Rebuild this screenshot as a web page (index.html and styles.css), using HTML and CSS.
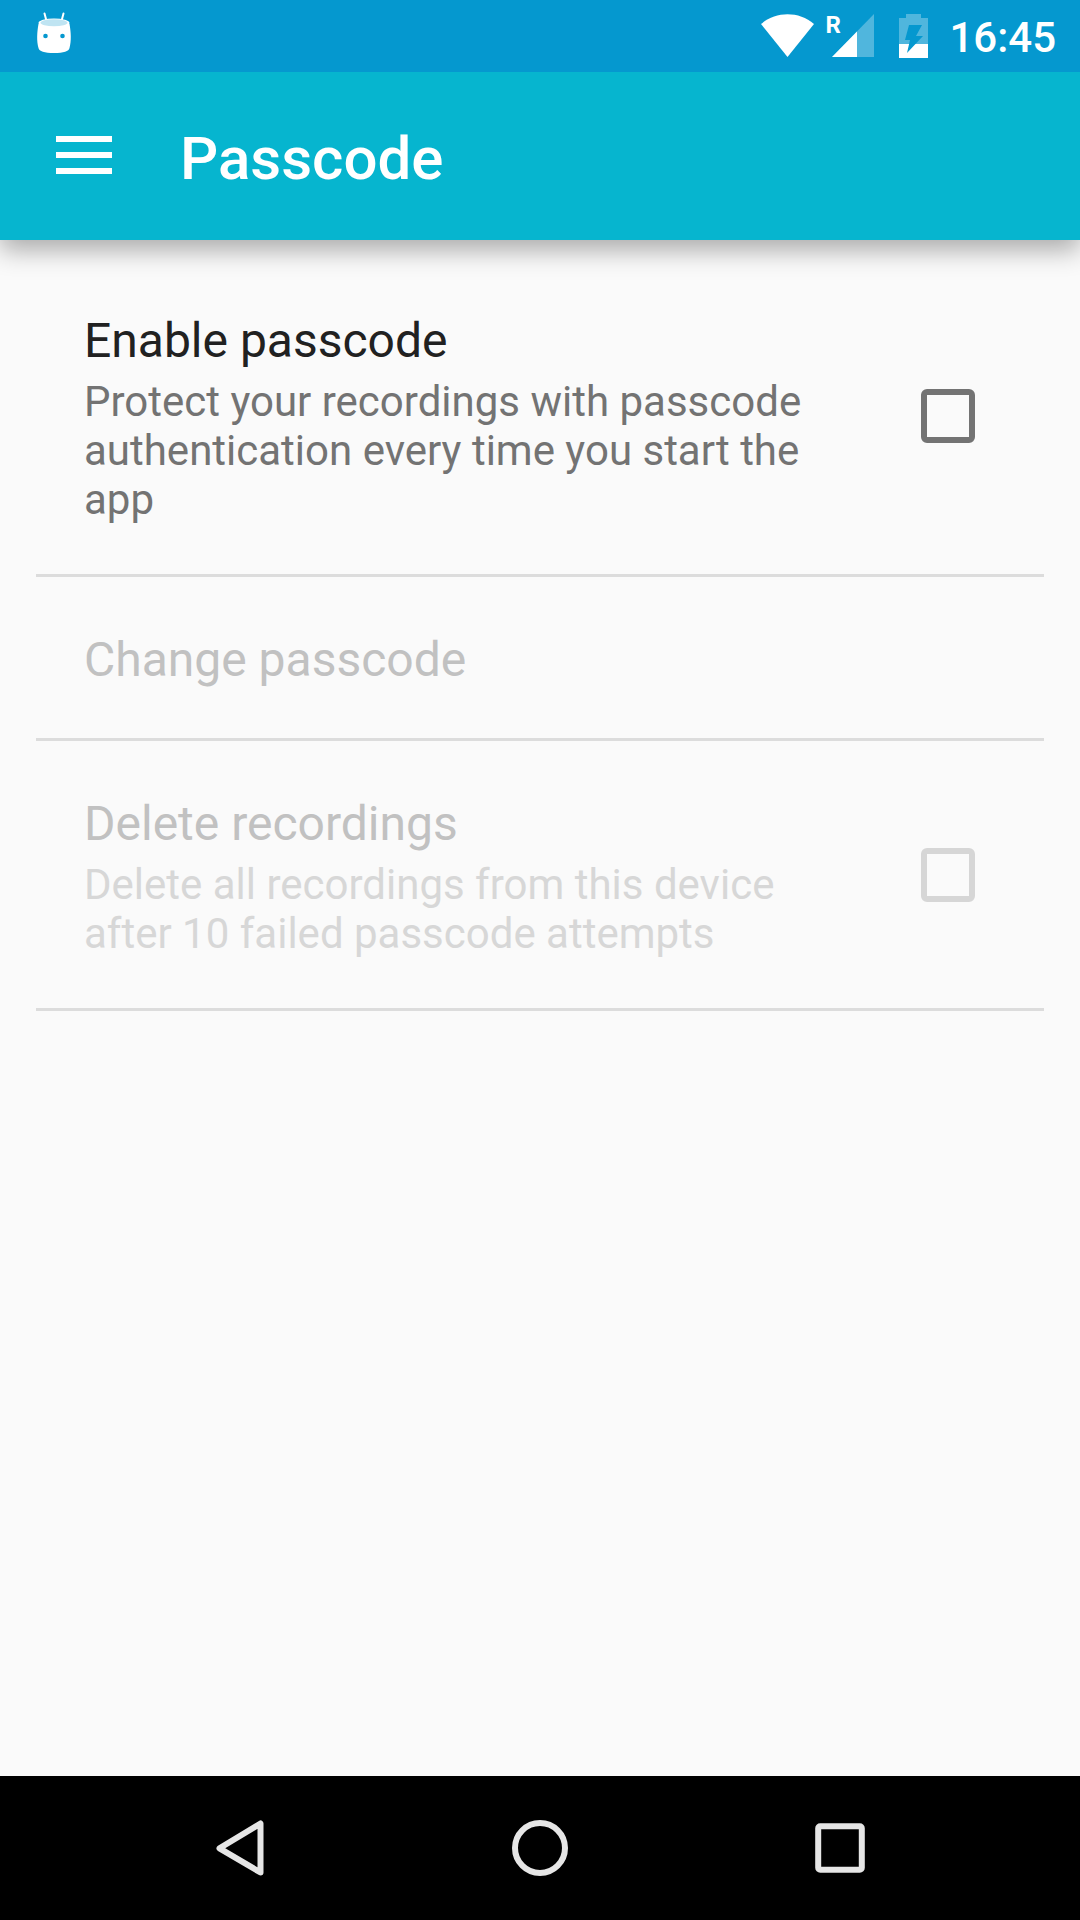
FILE: index.html
```html
<!DOCTYPE html>
<html lang="en">
<head>
<meta charset="utf-8">
<meta name="viewport" content="width=device-width, initial-scale=1">
<title>Passcode</title>
<link rel="stylesheet" href="styles.css">
</head>
<body>
<div class="status-bar">
  <svg class="robot" width="36" height="44" viewBox="36 11 36 44" aria-hidden="true">
    <path d="M44.500 13.500L46.500 21M63.500 13.500L61.500 21" stroke="#fff" stroke-width="2" stroke-linecap="round"/>
    <path d="M38.500 24C37 32 36.500 41 38.500 48Q39.500 53 54 53Q68.500 53 69.500 48C71.500 41 71 32 69.500 24Z" fill="#fff"/>
    <ellipse cx="54" cy="23" rx="15.500" ry="4.500" fill="#fff"/>
    <ellipse cx="54" cy="22.800" rx="13.500" ry="3.500" fill="#bfe4f2"/>
    <circle cx="45.500" cy="36" r="2.300" fill="#0598cf"/>
    <circle cx="62.500" cy="36" r="2.300" fill="#0598cf"/>
  </svg>
  <div class="status-icons">
    <svg width="54" height="44" viewBox="761 14 54 44" aria-hidden="true">
      <path d="M787.500 57L761 24C776 11 799 11 814 24Z" fill="#fff"/>
    </svg>
    <div class="signal">
      <span class="roaming">R</span>
      <svg width="42" height="44" viewBox="0 0 42 44" aria-hidden="true">
        <path d="M42 0V43H0Z" fill="#50b6dd"/>
        <path d="M25 17.500V43H0Z" fill="#fff"/>
      </svg>
    </div>
    <svg class="battery" width="29" height="44" viewBox="0 0 29 44" aria-hidden="true">
      <path d="M7 0H22V4H29V44H0V4H7Z" fill="#50b6dd"/>
      <path d="M0 30H29V44H0Z" fill="#fff"/>
      <path d="M10 11H23L17 22H24L8 39L11 26H6Z" fill="#0598cf"/>
    </svg>
    <time class="clock">16:45</time>
  </div>
</div>
<header class="toolbar">
  <button class="menu" type="button" aria-label="Menu">
    <svg width="56" height="38" viewBox="0 0 56 38" aria-hidden="true">
      <path d="M0 0H56V6H0ZM0 16H56V22H0ZM0 32H56V38H0Z" fill="#fff"/>
    </svg>
  </button>
  <h1 class="title">Passcode</h1>
</header>
<main class="settings">
  <label class="row" for="enable">
    <span class="text">
      <span class="name">Enable passcode</span>
      <span class="summary">Protect your recordings with passcode authentication every time you start the app</span>
    </span>
    <input class="box" id="enable" type="checkbox">
  </label>
  <button class="row disabled" type="button" disabled>
    <span class="text">
      <span class="name">Change passcode</span>
    </span>
  </button>
  <label class="row disabled" for="delete">
    <span class="text">
      <span class="name">Delete recordings</span>
      <span class="summary">Delete all recordings from this device after 10 failed passcode attempts</span>
    </span>
    <input class="box" id="delete" type="checkbox" disabled>
  </label>
</main>
<nav class="nav-bar">
  <button class="nav-button" type="button" aria-label="Back">
    <svg width="56" height="56" viewBox="0 0 56 56" aria-hidden="true">
      <path d="M48.500 3.500V52.500L7.500 28.300Z" fill="none" stroke="#e6e6e6" stroke-width="6" stroke-linejoin="round"/>
    </svg>
  </button>
  <button class="nav-button" type="button" aria-label="Home">
    <svg width="56" height="56" viewBox="0 0 56 56" aria-hidden="true">
      <circle cx="28" cy="28" r="25" fill="none" stroke="#e6e6e6" stroke-width="6"/>
    </svg>
  </button>
  <button class="nav-button" type="button" aria-label="Recent apps">
    <svg width="56" height="56" viewBox="0 0 56 56" aria-hidden="true">
      <rect x="6.200" y="6.200" width="43.600" height="43.600" rx="2" fill="none" stroke="#e6e6e6" stroke-width="6"/>
    </svg>
  </button>
</nav>
</body>
</html>
```
FILE: styles.css
```css
* {
  box-sizing: border-box;
}

body {
  margin: 0;
  min-height: 100vh;
  display: flex;
  flex-direction: column;
  background: #fafafa;
  color: #212121;
  font-family: Roboto, "Liberation Sans", sans-serif;
}

button {
  margin: 0;
  padding: 0;
  border: 0;
  background: none;
  font: inherit;
}

svg {
  display: block;
}

.status-bar {
  position: relative;
  z-index: 1;
  height: 72px;
  padding: 0 24px 0 36px;
  display: flex;
  align-items: center;
  justify-content: space-between;
  background: #0598cf;
  color: #fff;
}

.robot {
  margin-bottom: 6px;
}

.status-icons {
  display: flex;
  align-items: center;
}

.signal {
  position: relative;
  margin: 0 25px 0 17px;
}

.roaming {
  position: absolute;
  left: -7px;
  top: -3px;
  font-size: 24px;
  line-height: 28px;
  font-weight: 700;
}

.clock {
  margin: 4px 0 0 21px;
  font-size: 42px;
  line-height: 48px;
  font-weight: 500;
}

.toolbar {
  height: 168px;
  padding: 0 56px;
  display: flex;
  align-items: center;
  gap: 68px;
  background: #06b5cf;
  color: #fff;
  box-shadow: 0 10px 24px rgba(0, 0, 0, 0.32);
}

.menu {
  margin-bottom: 2px;
}

.title {
  margin: 6px 0 0;
  font-size: 60px;
  line-height: 70px;
  font-weight: 500;
}

.settings {
  flex: 1;
  padding: 18px 36px 0;
}

.row {
  width: 100%;
  padding: 0 69px 0 48px;
  display: flex;
  align-items: center;
  justify-content: space-between;
  gap: 60px;
  border-bottom: 3px solid #dcdcdc;
  color: #212121;
  text-align: left;
}

.text {
  flex: 1;
  padding: 55px 0 50px;
  display: flex;
  flex-direction: column;
  gap: 8px;
}

.name {
  font-size: 48px;
  line-height: 56px;
}

.summary {
  color: #737373;
  font-size: 42px;
  line-height: 49px;
}

.box {
  appearance: none;
  flex: none;
  width: 54px;
  height: 54px;
  margin: 0;
  border: 6px solid #737373;
  border-radius: 6px;
}

.disabled {
  color: #c1c1c1;
}

.disabled .summary {
  color: #d7d7d7;
}

.disabled .box {
  border-color: #d6d6d6;
}

.nav-bar {
  height: 144px;
  padding: 0 90px;
  display: grid;
  grid-template-columns: repeat(3, 1fr);
  background: #000;
}

.nav-button {
  display: flex;
  align-items: center;
  justify-content: center;
}
```
